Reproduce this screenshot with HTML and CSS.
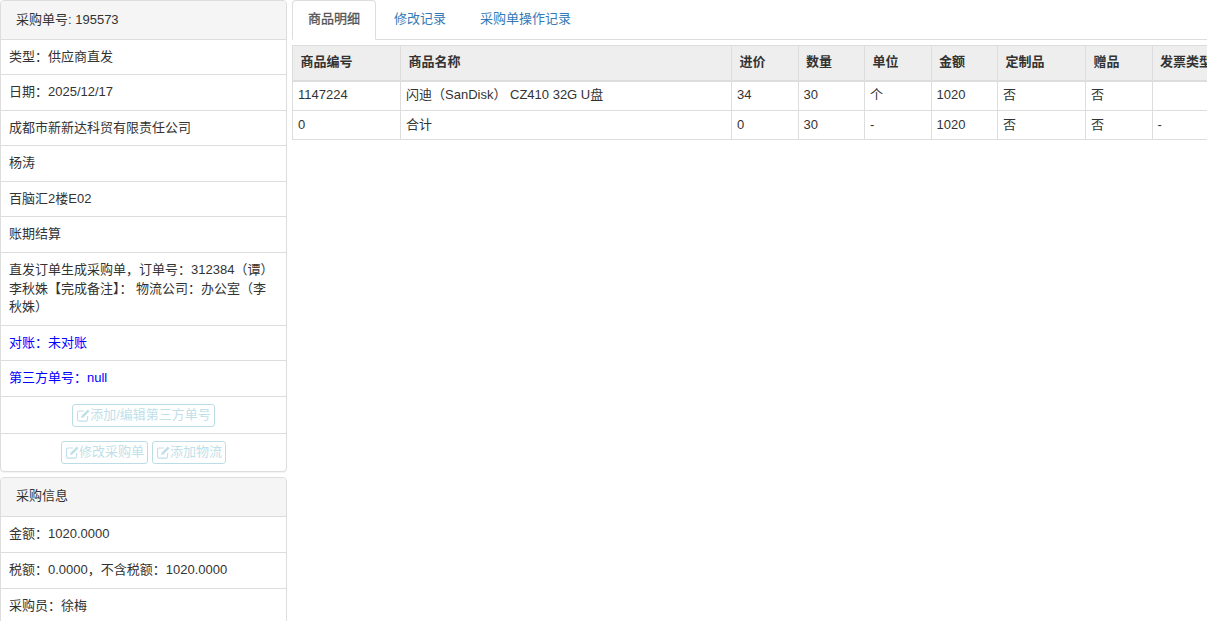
FILE: index.html
```html
<!DOCTYPE html>
<html lang="zh">
<head>
<meta charset="utf-8">
<title>采购单</title>
<link rel="stylesheet" href="styles.css">
</head>
<body>
<svg class="defs" width="0" height="0" aria-hidden="true">
  <symbol id="edit" viewBox="0 0 14 14">
    <path d="M11.4 7.6v3.8a1.6 1.6 0 0 1-1.6 1.6H2.2a1.6 1.6 0 0 1-1.6-1.6V3.8a1.6 1.6 0 0 1 1.6-1.6h5.2" fill="none" stroke="currentColor" stroke-width="1.2"/>
    <path d="M11.6.6l1.9 1.9-6.6 6.6-2.5.6.6-2.5z" fill="currentColor"/>
  </symbol>
</svg>
<div class="page">
  <aside class="side">
    <section class="panel">
      <h3 class="panel-head">采购单号: 195573</h3>
      <ul class="list">
        <li>类型：供应商直发</li>
        <li>日期：2025/12/17</li>
        <li>成都市新新达科贸有限责任公司</li>
        <li>杨涛</li>
        <li>百脑汇2楼E02</li>
        <li>账期结算</li>
        <li>直发订单生成采购单，订单号：312384（谭）李秋姝【完成备注】： 物流公司：办公室（李秋姝）</li>
        <li class="blue">对账：未对账</li>
        <li class="blue">第三方单号：null</li>
        <li class="actions"><button class="btn" disabled><svg class="ico"><use href="#edit"/></svg>添加/编辑第三方单号</button></li>
        <li class="actions actions-last"><button class="btn" disabled><svg class="ico"><use href="#edit"/></svg>修改采购单</button><button class="btn" disabled><svg class="ico"><use href="#edit"/></svg>添加物流</button></li>
      </ul>
    </section>
    <section class="panel">
      <h3 class="panel-head panel-head-tall">采购信息</h3>
      <ul class="list">
        <li>金额：1020.0000</li>
        <li>税额：0.0000，不含税额：1020.0000</li>
        <li>采购员：徐梅</li>
      </ul>
    </section>
  </aside>
  <main class="main">
    <nav class="tabs">
      <a class="tab active">商品明细</a>
      <a class="tab">修改记录</a>
      <a class="tab">采购单操作记录</a>
    </nav>
    <table class="grid">
      <colgroup>
        <col class="c-code"><col class="c-name"><col class="c-a"><col class="c-a"><col class="c-a"><col class="c-a"><col class="c-custom"><col class="c-a"><col class="c-inv">
      </colgroup>
      <thead>
        <tr><th>商品编号</th><th>商品名称</th><th>进价</th><th>数量</th><th>单位</th><th>金额</th><th>定制品</th><th>赠品</th><th>发票类型</th></tr>
      </thead>
      <tbody>
        <tr><td>1147224</td><td>闪迪（SanDisk） CZ410 32G U盘</td><td>34</td><td>30</td><td>个</td><td>1020</td><td>否</td><td>否</td><td></td></tr>
        <tr><td>0</td><td>合计</td><td>0</td><td>30</td><td>-</td><td>1020</td><td>否</td><td>否</td><td>-</td></tr>
      </tbody>
    </table>
  </main>
</div>
</body>
</html>
```
FILE: styles.css
```css
* { box-sizing: border-box; }
html, body { margin: 0; height: 100%; overflow: hidden; background: #fff; }
body { font: 13px/1.42857 "Liberation Sans", "Noto Sans CJK SC", sans-serif; color: #333; }
.defs { position: absolute; }
.page { display: flex; gap: 5px; height: 621px; overflow: hidden; }
.side { flex: 0 0 287px; display: flex; flex-direction: column; gap: 5px; }
.panel { border: 1px solid #ddd; border-radius: 4px; box-shadow: 0 1px 1px rgba(0,0,0,.05); background: #fff; }
.panel-head { margin: 0; padding: 9.5px 15px; height: 37.6px; font-size: 13px; font-weight: 400; line-height: 18.57px; background: #f5f5f5; border-radius: 3px 3px 0 0; }
.panel-head-tall { height: 38.6px; }
.list { list-style: none; margin: 0; padding: 0; }
.list li { padding: 8px; border-top: 1px solid #ddd; }
.list li.blue { color: #00f; }
.list li.actions { padding: 7px 8px 6px; display: flex; justify-content: center; gap: 4px; }
.list li.actions-last { padding-bottom: 7px; }
.btn { display: inline-flex; align-items: center; height: 23px; padding: 0 3px 0 4px; font: inherit; color: #bfdfe9; background: #fff; border: 1px solid #bcdde8; border-radius: 3px; }
.ico { width: 13px; height: 13px; flex: none; }
.main { flex: 1; min-width: 0; overflow: hidden; }
.tabs { display: flex; height: 40px; border-bottom: 1px solid #ddd; }
.tab { padding: 10px 16px 0; color: #337ab7; height: 40px; margin-right: 2px; }
.tab.active { color: #555; background: #fff; border: 1px solid #ddd; border-bottom-color: #fff; border-radius: 4px 4px 0 0; padding: 9px 15px 0; -webkit-text-stroke: .3px #555; }
.grid { margin-top: 5px; border-collapse: collapse; table-layout: fixed; width: 960px; }
.c-code { width: 108px; }
.c-name { width: 331px; }
.c-a { width: 66.5px; }
.c-custom { width: 88px; }
.c-inv { width: 100px; }
.grid th, .grid td { border: 1px solid #ddd; text-align: left; white-space: nowrap; overflow: hidden; }
.grid th { height: 35px; padding: 0 7.5px 1px; background: #eee; font-weight: 700; border-bottom: 2px solid #ddd; }
.grid td { height: 30px; padding: 0 5px; }
.grid tbody tr:last-child td { height: 29px; }
```
